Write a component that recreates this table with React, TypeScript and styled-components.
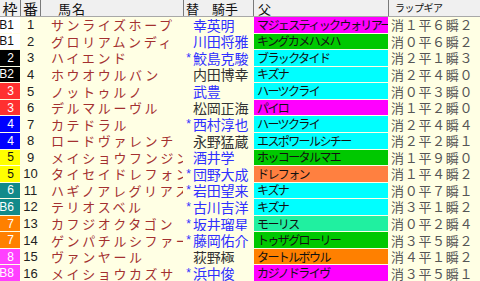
import React from "react";
import styled, { createGlobalStyle } from "styled-components";

const GlobalStyle = createGlobalStyle`
  html, body { margin: 0; padding: 0; background: #FFFFE4; }
  #root { width: 480px; height: 281px; overflow: hidden; }
`;

const COLS = "20px 19px 142px 69px 134px 91px";

const Table = styled.div`
  width: 480px;
  height: 281px;
  display: flex;
  flex-direction: column;
  background: #FFFFE4;
  font-family: "Noto Sans CJK JP", sans-serif;
  line-height: 1;
`;

const HeaderRow = styled.div`
  display: grid;
  grid-template-columns: ${COLS};
  column-gap: 1px;
  height: 16px;
  flex: none;
  background: #7a7a7a;
  border-bottom: 1px solid #a8a8a8;
`;

const HeadCell = styled.div<{ $size?: number; $center?: boolean; $pad?: number }>`
  background: #F0F0F0;
  display: flex;
  align-items: center;
  justify-content: ${(p) => (p.$center ? "center" : "flex-start")};
  padding-left: ${(p) => p.$pad ?? 0}px;
  font-size: ${(p) => p.$size ?? 13}px;
  line-height: 1;
  color: #111;
  white-space: nowrap;
  overflow: hidden;
`;

const Spaced = styled.span<{ $ls: number }>`
  letter-spacing: ${(p) => p.$ls}px;
`;

const Body = styled.div`
  flex: 1;
  min-height: 0;
  display: grid;
  grid-template-rows: repeat(16, minmax(0, 1fr));
  row-gap: 1px;
  background: #FFFFE4;
`;

const Row = styled.div`
  display: grid;
  grid-template-columns: ${COLS};
  column-gap: 1px;
  min-height: 0;
`;

const Cell = styled.div`
  display: flex;
  align-items: center;
  white-space: nowrap;
  overflow: hidden;
  min-width: 0;
  min-height: 0;
  line-height: 1;
`;

const WakuCell = styled(Cell)<{ $bg: string; $fg: string }>`
  background: ${(p) => p.$bg};
  color: ${(p) => p.$fg};
  justify-content: flex-end;
  padding-right: 6px;
  font-family: "Liberation Sans", sans-serif;
  font-size: 12px;
`;

const NumCell = styled(Cell)`
  justify-content: center;
  font-family: "Liberation Sans", sans-serif;
  font-size: 13px;
  color: #222;
`;

const NameCell = styled(Cell)`
  padding-left: 10px;
  font-size: 13px;
  letter-spacing: 2.6px;
  color: #A33030;
`;

const JockeyCell = styled(Cell)<{ $fg: string }>`
  font-size: 14px;
  letter-spacing: -0.2px;
  color: ${(p) => p.$fg};
`;

const Mark = styled.span`
  width: 9px;
  flex: none;
  font-family: "Liberation Sans", sans-serif;
  font-size: 12px;
  color: #3030FF;
  text-align: center;
  letter-spacing: 0;
`;

const SireCell = styled(Cell)<{ $bg: string }>`
  background: ${(p) => p.$bg};
  padding-left: 3px;
  font-size: 12px;
  letter-spacing: -1.6px;
  color: #111;
`;

const GearCell = styled(Cell)`
  padding-left: 2px;
  font-size: 13px;
  letter-spacing: 0.7px;
  color: #555;
`;

const WAKU: Record<number, [string, string]> = {
  1: ["#FFFFFF", "#111"],
  2: ["#000000", "#fff"],
  3: ["#FF3030", "#fff"],
  4: ["#0000FF", "#fff"],
  5: ["#FFFF00", "#111"],
  6: ["#128A8A", "#fff"],
  7: ["#FF8000", "#fff"],
  8: ["#FF40FF", "#fff"],
};

const MAG = "#FF00FF";
const GRN = "#00C800";
const CYN = "#00FFFF";
const BLUE = "#3030FF";
const DARK = "#333";

type R = {
  w: number; b?: boolean; n: number; name: string; m?: boolean;
  j: string; jc: string; s: string; sc: string; g: string;
};

const rows: R[] = [
  { w: 1, b: true, n: 1, name: "サンライズホープ", j: "幸英明", jc: BLUE, s: "マジェスティックウォリアー", sc: MAG, g: "消１平６瞬２" },
  { w: 1, b: true, n: 2, name: "グロリアムンディ", j: "川田将雅", jc: BLUE, s: "キングカメハメハ", sc: GRN, g: "消０平６瞬２" },
  { w: 2, n: 3, name: "ハイエンド", m: true, j: "鮫島克駿", jc: BLUE, s: "ブラックタイド", sc: CYN, g: "消２平１瞬３" },
  { w: 2, b: true, n: 4, name: "ホウオウルバン", j: "内田博幸", jc: DARK, s: "キズナ", sc: CYN, g: "消２平４瞬０" },
  { w: 3, n: 5, name: "ノットゥルノ", j: "武豊", jc: BLUE, s: "ハーツクライ", sc: CYN, g: "消０平３瞬０" },
  { w: 3, n: 6, name: "デルマルーヴル", j: "松岡正海", jc: DARK, s: "パイロ", sc: MAG, g: "消１平２瞬０" },
  { w: 4, n: 7, name: "カテドラル", m: true, j: "西村淳也", jc: BLUE, s: "ハーツクライ", sc: CYN, g: "消２平４瞬４" },
  { w: 4, n: 8, name: "ロードヴァレンチ", j: "永野猛蔵", jc: DARK, s: "エスポワールシチー", sc: CYN, g: "消２平２瞬１" },
  { w: 5, n: 9, name: "メイショウフンジン", j: "酒井学", jc: BLUE, s: "ホッコータルマエ", sc: GRN, g: "消１平９瞬０" },
  { w: 5, n: 10, name: "タイセイドレフォン", m: true, j: "団野大成", jc: BLUE, s: "ドレフォン", sc: "#FF8040", g: "消１平４瞬２" },
  { w: 6, n: 11, name: "ハギノアレグリアス", m: true, j: "岩田望来", jc: BLUE, s: "キズナ", sc: CYN, g: "消０平７瞬１" },
  { w: 6, b: true, n: 12, name: "テリオスベル", m: true, j: "古川吉洋", jc: BLUE, s: "キズナ", sc: CYN, g: "消３平１瞬２" },
  { w: 7, n: 13, name: "カフジオクタゴン", m: true, j: "坂井瑠星", jc: BLUE, s: "モーリス", sc: "#20F0A0", g: "消０平２瞬４" },
  { w: 7, n: 14, name: "ゲンパチルシファー", m: true, j: "藤岡佑介", jc: BLUE, s: "トゥザグローリー", sc: GRN, g: "消３平５瞬２" },
  { w: 8, n: 15, name: "ヴァンヤール", j: "荻野極", jc: DARK, s: "タートルボウル", sc: "#FF8000", g: "消４平１瞬２" },
  { w: 8, b: true, n: 16, name: "メイショウカズサ", m: true, j: "浜中俊", jc: BLUE, s: "カジノドライヴ", sc: MAG, g: "消３平５瞬１" },
];

export default function App() {
  return (
    <>
      <GlobalStyle />
      <Table>
        <HeaderRow>
          <HeadCell $size={15} $center>枠</HeadCell>
          <HeadCell $size={15} $center>番</HeadCell>
          <HeadCell $pad={17}><Spaced $ls={1}>馬名</Spaced></HeadCell>
          <HeadCell $pad={2}><Spaced $ls={0}>替　騎手</Spaced></HeadCell>
          <HeadCell $pad={4}>父</HeadCell>
          <HeadCell $pad={6} $size={10}><Spaced $ls={-0.5}>ラップギア</Spaced></HeadCell>
        </HeaderRow>
        <Body>
          {rows.map((r) => {
            const [bg, fg] = WAKU[r.w];
            return (
              <Row key={r.n}>
                <WakuCell $bg={bg} $fg={fg}>{(r.b ? "B" : "") + r.w}</WakuCell>
                <NumCell>{r.n}</NumCell>
                <NameCell>{r.name}</NameCell>
                <JockeyCell $fg={r.jc}>
                  <Mark>{r.m ? "*" : ""}</Mark>
                  {r.j}
                </JockeyCell>
                <SireCell $bg={r.sc}>{r.s}</SireCell>
                <GearCell>{r.g}</GearCell>
              </Row>
            );
          })}
        </Body>
      </Table>
    </>
  );
}
